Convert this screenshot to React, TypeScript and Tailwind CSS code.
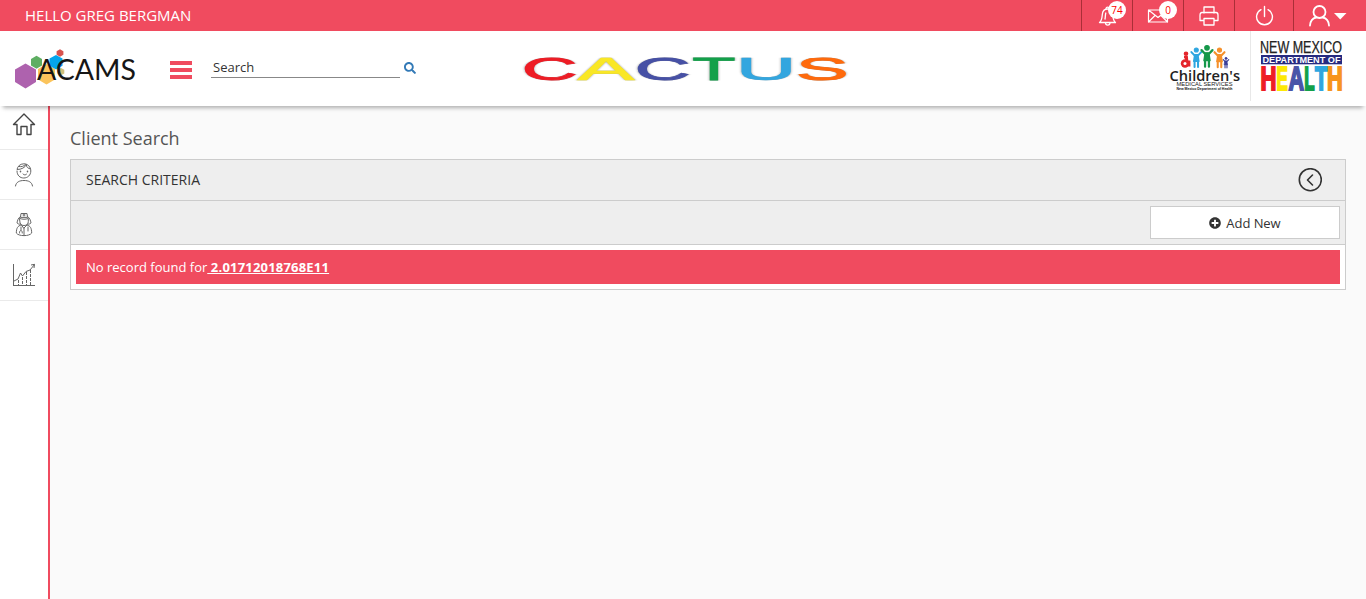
import React from "react";
import { FaSearch, FaPlusCircle } from "react-icons/fa";

// left / ink are the side bearing and ink width of each capital, in em
type Glyph = { ch: string; fill: string; x: number; w: number; left: number; ink: number };

const CACTUS: Glyph[] = [
  { ch: "C", fill: "#ee1c25", x: 1.5, w: 48.5, left: 0.05, ink: 0.627 },
  { ch: "A", fill: "#f9e726", x: 54, w: 56, left: 0.002, ink: 0.663 },
  { ch: "C", fill: "#4650a5", x: 114.5, w: 48.5, left: 0.05, ink: 0.627 },
  { ch: "T", fill: "#13a04a", x: 170, w: 40, left: 0.02, ink: 0.57 },
  { ch: "U", fill: "#33a6df", x: 218.5, w: 47, left: 0.078, ink: 0.563 },
  { ch: "S", fill: "#ff6a0c", x: 275.5, w: 45.5, left: 0.045, ink: 0.577 },
];

const HEALTH: Glyph[] = [
  { ch: "H", fill: "#ee1c25", x: 2, w: 13, left: 0.067, ink: 0.588 },
  { ch: "E", fill: "#fde806", x: 17.7, w: 9.5, left: 0.067, ink: 0.56 },
  { ch: "A", fill: "#4a55a8", x: 28.5, w: 15.5, left: 0.002, ink: 0.718 },
  { ch: "L", fill: "#13a04a", x: 45.5, w: 8.8, left: 0.067, ink: 0.52 },
  { ch: "T", fill: "#2ea6e0", x: 55.3, w: 11.5, left: 0.02, ink: 0.57 },
  { ch: "H", fill: "#f7941d", x: 68.5, w: 12.8, left: 0.067, ink: 0.588 },
];

function Letters({ glyphs, size, y, weight, stroke, edge }: { glyphs: Glyph[]; size: number; y: number; weight: number; stroke: number; edge?: string }) {
  return (
    <>
      {glyphs.map((l, i) => {
        const s = l.w / (l.ink * size);
        return (
          <text
            key={i}
            transform={`translate(${l.x - l.left * size * s} ${y}) scale(${s} 1)`}
            fontFamily="Liberation Sans, Arial, sans-serif"
            fontWeight={weight}
            fontSize={size}
            fill={l.fill}
            stroke={l.fill}
            strokeWidth={stroke}
            vectorEffect="non-scaling-stroke"
            style={edge ? { filter: `drop-shadow(0 0 0.6px ${edge})` } : undefined}
          >
            {l.ch}
          </text>
        );
      })}
    </>
  );
}

function CactusLogo() {
  return (
    <svg width="326" height="30" viewBox="0 0 326 30" className="block overflow-visible">
      <Letters glyphs={CACTUS} size={30.5} y={25.8} weight={400} stroke={1.5} edge="#999" />
    </svg>
  );
}

function AcamsLogo() {
  return (
    <svg width="126" height="46" viewBox="0 0 126 46" className="block overflow-visible">
      <path d="M11.500 16.500 22 22.500v12.500l-10.500 6.500L1 35V22.500z" fill="#ae62ae" />
      <path d="M22.500 8.800 28 12v6.500l-5.500 3.300-5.500-3.300V12z" fill="#5eae62" />
      <path d="M32.500 17 41 22v10.500l-8.500 5-8.500-5V22z" fill="#fbc45c" />
      <path d="M42 8l6.500 3.600v7.200L42 22.500l-6.500-3.700v-7.200z" fill="#05a5ec" />
      <path d="M46 2.300l3.400 1.900v3.600L46 9.700l-3.400-1.900V4.200z" fill="#d8524e" />
      <path d="M47 21l3.300 1.800v3.600L47 28.300l-3.300-1.900v-3.600z" fill="#cfc07c" />
      <text x="23" y="33.300" textLength="99" lengthAdjust="spacingAndGlyphs" fontFamily="Lato, sans-serif" fontSize="28.500" fill="#161616">
        ACAMS
      </text>
    </svg>
  );
}

function Person({ x, y, s, color }: { x: number; y: number; s: number; color: string }) {
  return (
    <g transform={`translate(${x} ${y}) scale(${s})`} fill={color} stroke={color} strokeLinecap="round" strokeLinejoin="round">
      <circle cx="0" cy="2.500" r="2" strokeWidth="1" />
      <path d="M-4.800 4.500-2 7.500h4l2.800-3" fill="none" strokeWidth="2" />
      <path d="M-1.500 7h3l1 6.500h-5z" strokeWidth="1.500" />
      <path d="M-1.700 13v6M1.700 13v6" fill="none" strokeWidth="2" />
    </g>
  );
}

function ChildrensLogo() {
  return (
    <svg width="74" height="50" viewBox="0 0 74 50" className="block overflow-visible">
      <circle cx="17" cy="10.800" r="2.300" fill="#e4252b" />
      <path d="M15 14h3l.5 4.500h2v4h-2" fill="#e4252b" stroke="#e4252b" strokeWidth="1.800" />
      <circle cx="16" cy="20.500" r="4.200" fill="#e4252b" />
      <circle cx="16" cy="20.500" r="1.500" fill="#fff" />
      <Person x={27.3} y={4.5} s={1.02} color="#2ea6e0" />
      <Person x={38} y={2} s={1.14} color="#16984a" />
      <Person x={50.5} y={4.5} s={1.04} color="#f5902a" />
      <Person x={57} y={14} s={0.57} color="#3a3d98" />
      <text x="0.500" y="37.500" textLength="70.500" lengthAdjust="spacingAndGlyphs" fontFamily="Open Sans, sans-serif" fontWeight="600" fontSize="15" fill="#222">
        Children's
      </text>
      <text x="7.500" y="43" textLength="56" lengthAdjust="spacingAndGlyphs" fontFamily="Liberation Sans, sans-serif" fontSize="6.200" fill="#222">
        MEDICAL SERVICES
      </text>
      <text x="7.500" y="46.700" textLength="56" lengthAdjust="spacingAndGlyphs" fontFamily="Liberation Sans, sans-serif" fontWeight="700" fontSize="3.600" fill="#111">
        New Mexico Department of Health
      </text>
    </svg>
  );
}

function HealthLogo() {
  return (
    <svg width="83" height="54" viewBox="0 0 83 54" className="block overflow-visible">
      <text x="0" y="13.500" textLength="82" lengthAdjust="spacingAndGlyphs" fontFamily="Liberation Sans, sans-serif" fontSize="16" fill="#222" stroke="#222" strokeWidth="0.250">
        NEW MEXICO
      </text>
      <rect x="1" y="16" width="81" height="9.300" fill="#262a80" />
      <text x="2.500" y="24" textLength="78" lengthAdjust="spacingAndGlyphs" fontFamily="Liberation Sans, sans-serif" fontWeight="700" fontSize="9.400" fill="#fff">
        DEPARTMENT OF
      </text>
      <Letters glyphs={HEALTH} size={32.5} y={51.2} weight={700} stroke={1.7} />
    </svg>
  );
}

const line = { fill: "none", stroke: "#fff", strokeWidth: 1.3, strokeLinejoin: "round", strokeLinecap: "round" } as const;
const dark = { fill: "none", stroke: "#666", strokeWidth: 1, strokeLinejoin: "round", strokeLinecap: "round" } as const;

function Badge({ children }: { children: React.ReactNode }) {
  return (
    <span className="absolute top-px left-[26px] flex size-[18px] items-center justify-center rounded-full bg-white text-[10px] leading-none font-medium text-[#f00]">
      {children}
    </span>
  );
}

function TopBar() {
  const cell = "relative flex h-full items-center border-l border-[#a92f37]";
  return (
    <div className="flex h-[31px] items-center bg-[#f04b5f] pl-[25px] text-[15px] text-white">
      <span className="flex-1 whitespace-nowrap">HELLO GREG BERGMAN</span>
      <div className={`${cell} w-[51px] pl-4`}>
        <svg width="20" height="22" viewBox="0 0 20 22" {...line}>
          <path d="M1.500 17.500c2.500-2 2.500-4.500 2.800-8C4.600 6 6.500 4 9.500 4s5 2 5.200 5.500c.3 3.500.3 6 2.800 8z" />
          <path d="M8 4c0-2.500 3-2.500 3 0M7.500 17.800c0 3 4.500 3 4.500 0M7 14c.5-2 .2-4 .8-6" />
        </svg>
        <Badge>74</Badge>
      </div>
      <div className={`${cell} w-[51px] pl-[14px]`}>
        <svg width="22" height="16" viewBox="0 0 22 16" {...line} strokeWidth="1.200">
          <path d="M1.500 2h19v12h-19zM1.500 2l9.500 7.500L20.500 2M1.500 14l6.500-6.500M20.500 14 14 7.500" />
        </svg>
        <Badge>0</Badge>
      </div>
      <div className={`${cell} w-[51px] pl-[15px]`}>
        <svg width="20" height="20" viewBox="0 0 20 20" {...line}>
          <path d="M5 7V1h10v6M5 14.500H1v-5C1 8 1.500 6.500 3 6.500h14c1.500 0 2 1 2 2.500v5.500h-4M5 12.500h10V19H5z" />
        </svg>
      </div>
      <div className={`${cell} w-[59px] pl-[20px]`}>
        <svg width="20" height="22" viewBox="0 0 20 22" {...line} strokeWidth="1.400">
          <path d="M9.500 1.500v10M6 4.700a7.900 7.900 0 1 0 7 0" />
        </svg>
      </div>
      <div className={`${cell} w-[73px] pl-[15px]`}>
        <svg width="40" height="23" viewBox="0 0 40 23" {...line} strokeWidth="1.800">
          <circle cx="10.500" cy="8" r="6" />
          <path d="M1 21.500c.3-4.500 3-7.300 6.200-8M20 21.500c-.3-4.500-3-7.300-6.200-8" />
          <path d="M25 9h12.500l-6.250 6.500z" fill="#fff" stroke="none" />
        </svg>
      </div>
    </div>
  );
}

function Header() {
  return (
    <header className="relative flex h-[75px] bg-white shadow-[0_5px_4px_-3px_rgba(0,0,0,0.3)]">
      <div className="w-[170px] pt-4 pl-[14px]">
        <AcamsLogo />
      </div>
      <div className="flex w-[41px] flex-col gap-[3px] pt-[30px]">
        <span className="h-1 w-[22px] bg-[#f04b5f]" />
        <span className="h-1 w-[22px] bg-[#f04b5f]" />
        <span className="h-1 w-[22px] bg-[#f04b5f]" />
      </div>
      <div className="mt-[27px] flex h-5 w-[189px] items-center border-b border-[#888] pl-[2px] text-[13px] text-[#333]">Search</div>
      <FaSearch className="mt-[31px] ml-[4px] size-3 text-[#337ab7]" />
      <div className="ml-[108px] w-[326px] pt-[23px]">
        <CactusLogo />
      </div>
      <div className="ml-auto w-[81px] pt-3">
        <ChildrensLogo />
      </div>
      <div className="mb-[5px] w-[116px] border-l border-[#e8e8e8] pt-2 pl-[9px]">
        <HealthLogo />
      </div>
    </header>
  );
}

function Sidebar() {
  const item = "flex h-[50px] shrink-0 items-center justify-center border-b border-[#eaeaea]";
  return (
    <nav className="flex w-[50px] flex-col border-r-2 border-[#f04b5f] bg-white">
      <div className="flex h-11 shrink-0 justify-center border-b border-[#eaeaea] pt-[6px]">
        <svg width="24" height="24" viewBox="0 0 24 24" {...dark} stroke="#444" strokeWidth="1.400">
          <path d="M1.500 12.500 12 2l10.500 10.500H19V22.500h-4v-8H9v8H5V12.500z" />
        </svg>
      </div>
      <div className={item}>
        <svg width="24" height="26" viewBox="0 0 24 26" {...dark}>
          <path d="M5 9c0 4.500 3 7 6.800 7s7-2.800 7-7-3-7.200-7-7.200C8 1.800 5.500 4.500 5 7.500c4.500 0 8-2 9.500-5-.5 2.500 1.500 4 4 4.500M7 4.500c2.500.5 4.500 0 6.500-2" />
          <path d="M11 12c1 1.200 2.500 1.200 3.500.2M3.500 24c.5-4 4-5.500 8.500-5.500s8 1.500 8.500 5.500" />
          <path d="M8.500 9.300v.4M15.500 9.300v.4" strokeWidth="1.500" />
        </svg>
      </div>
      <div className={item}>
        <svg width="20" height="26" viewBox="0 0 20 26" {...dark} strokeWidth="1">
          <path d="M6.500 5 7 1.500h6l.5 3.500zM10 2v2M9 3h2M6.500 4.500C4 6 3.500 8.500 3 11c1 1 2 1.300 3.500 1.200M13.500 4.500C16 6 16.500 8.500 17 11c-1 1-2 1.300-3.500 1.200" />
          <path d="M5.800 6.500c3 1 5.500 1 8.500 0v3c0 2.500-1.500 4-4.300 4s-4.200-1.500-4.200-4z" />
          <path d="M7 13c-3.500 1-4.500 3-4.700 8 2.200 3.500 13.200 3.500 15.400 0-.2-5-1.200-7-4.700-8l-3 3zM10 16v7.500M7 15v3M5.500 21c-.2-3.500 3-3.500 2.800 0M14 15v4" />
        </svg>
      </div>
      <div className="flex h-[51px] shrink-0 items-center justify-center border-b border-[#eaeaea]">
        <svg width="24" height="24" viewBox="0 0 24 24" {...dark} strokeLinecap="butt">
          <path d="M1.500 1v22M1 22.500h22M2 18l4-2 2.500-6 2 3L14 8.500l4-1.500 4.500-5.500M19 2l3.500-.7L22 5" />
          <path d="M6.500 17v6M10.500 14v9M14.500 9v14M18.500 7v16" strokeDasharray="3 1" />
        </svg>
      </div>
    </nav>
  );
}

export default function App() {
  return (
    <div className="flex h-screen flex-col overflow-hidden bg-[#fafafa] font-['Open_Sans','Noto_Sans',sans-serif]">
      <TopBar />
      <Header />
      <div className="flex flex-1">
        <Sidebar />
        <main className="flex-1 px-5 pt-5">
          <h1 className="h-[33px] text-[18px] leading-6 text-[#555]">Client Search</h1>
          <section className="border border-[#ccc] bg-white text-[13px] text-[#333]">
            <div className="flex h-10 items-center justify-between bg-[#eee] pr-[23px] pl-[15px]">
              <h2 className="pb-[2px] text-[14px]">SEARCH CRITERIA</h2>
              <svg width="24" height="24" viewBox="0 0 24 24" {...dark} stroke="#333" strokeWidth="1.600">
                <circle cx="12.300" cy="11.700" r="11" />
                <path d="M14.500 7 9.500 12l5 5" />
              </svg>
            </div>
            <div className="flex h-[45px] items-center justify-end border-y border-[#ccc] bg-[#eee] pr-[5px]">
              <button className="flex h-[33px] w-[190px] items-center justify-center gap-[5px] border border-[#ccc] bg-white">
                <FaPlusCircle className="size-3" />
                <span className="pt-[2px] tracking-[-0.05px]">Add New</span>
              </button>
            </div>
            <div className="p-[5px]">
              <div className="flex h-[34px] items-center bg-[#f04b5f] px-[10px] pt-[2px] whitespace-pre text-white">
                No record found for<b className="font-bold tracking-[0.2px] underline"> 2.01712018768E11</b>
              </div>
            </div>
          </section>
        </main>
      </div>
    </div>
  );
}
